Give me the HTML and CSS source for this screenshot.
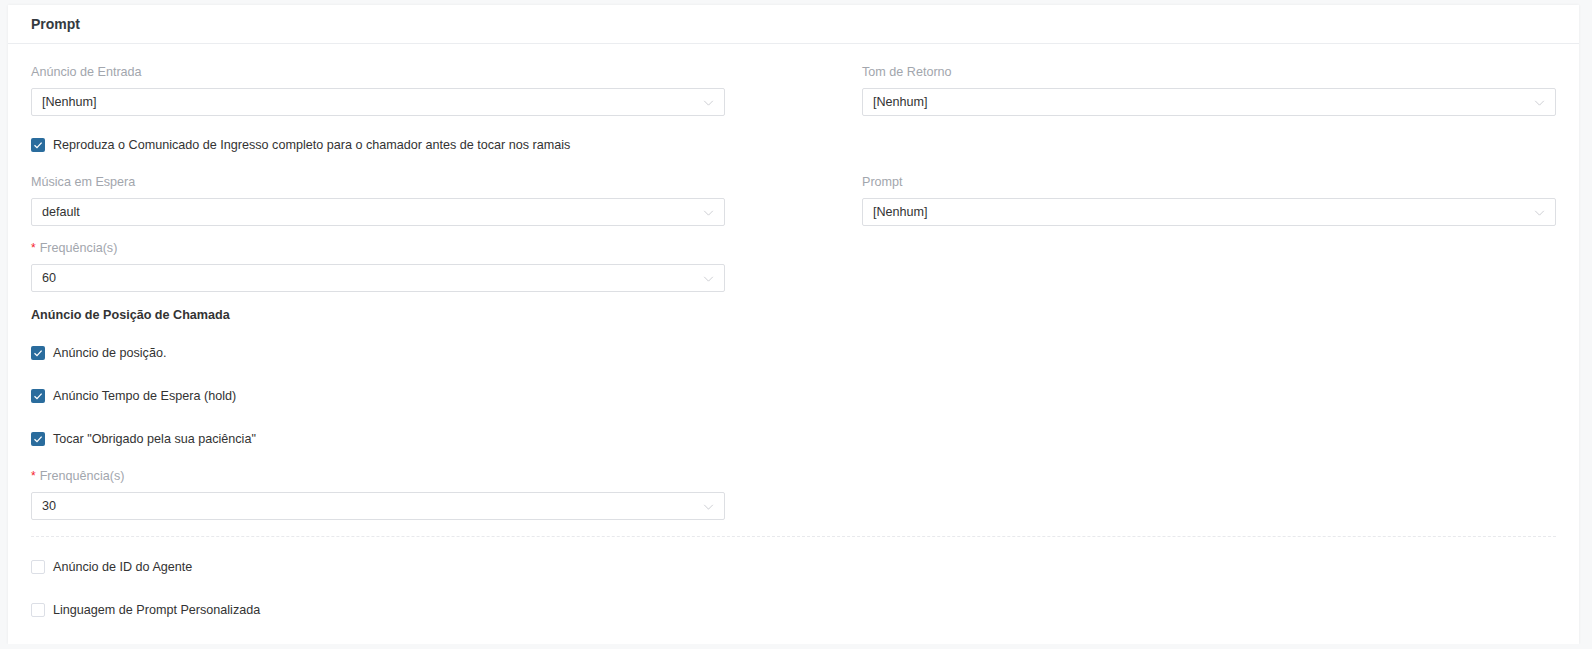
FILE: index.html
```html
<!DOCTYPE html>
<html lang="pt">
<head>
  <meta charset="UTF-8" />
  <title>Prompt</title>
  <link rel="stylesheet" href="styles.css">
</head>
<body>

<div class="card">
  <div class="card-header">Prompt</div>

  <div class="card-body">
    <div class="row">
      <div class="form-item">
        <label>Anúncio de Entrada</label>
        <div class="select">[Nenhum]<svg class="arrow" viewBox="0 0 12 7"><polyline points="1,1 6,6 11,1"/></svg></div>
      </div>
      <div class="form-item">
        <label>Tom de Retorno</label>
        <div class="select">[Nenhum]<svg class="arrow" viewBox="0 0 12 7"><polyline points="1,1 6,6 11,1"/></svg></div>
      </div>
    </div>

    <div class="check check-first">
      <span class="box checked"><svg viewBox="0 0 14 14"><polyline points="3.5,7.2 6,9.6 10.6,4.6"/></svg></span>
      Reproduza o Comunicado de Ingresso completo para o chamador antes de tocar nos ramais
    </div>

    <div class="row row-music">
      <div class="form-item">
        <label>Música em Espera</label>
        <div class="select">default<svg class="arrow" viewBox="0 0 12 7"><polyline points="1,1 6,6 11,1"/></svg></div>
      </div>
      <div class="form-item">
        <label>Prompt</label>
        <div class="select">[Nenhum]<svg class="arrow" viewBox="0 0 12 7"><polyline points="1,1 6,6 11,1"/></svg></div>
      </div>
    </div>

    <div class="row row-freq">
      <div class="form-item">
        <label><span class="req">*</span>Frequência(s)</label>
        <div class="select">60<svg class="arrow" viewBox="0 0 12 7"><polyline points="1,1 6,6 11,1"/></svg></div>
      </div>
    </div>

    <h4 class="section-title">Anúncio de Posição de Chamada</h4>

    <div class="check check-list">
      <span class="box checked"><svg viewBox="0 0 14 14"><polyline points="3.5,7.2 6,9.6 10.6,4.6"/></svg></span>
      Anúncio de posição.
    </div>
    <div class="check check-list">
      <span class="box checked"><svg viewBox="0 0 14 14"><polyline points="3.5,7.2 6,9.6 10.6,4.6"/></svg></span>
      Anúncio Tempo de Espera (hold)
    </div>
    <div class="check check-list">
      <span class="box checked"><svg viewBox="0 0 14 14"><polyline points="3.5,7.2 6,9.6 10.6,4.6"/></svg></span>
      Tocar "Obrigado pela sua paciência"
    </div>

    <div class="row row-freq2">
      <div class="form-item">
        <label><span class="req">*</span>Frenquência(s)</label>
        <div class="select">30<svg class="arrow" viewBox="0 0 12 7"><polyline points="1,1 6,6 11,1"/></svg></div>
      </div>
    </div>

    <div class="divider"></div>

    <div class="check check-agent">
      <span class="box"></span>
      Anúncio de ID do Agente
    </div>
    <div class="check check-list">
      <span class="box"></span>
      Linguagem de Prompt Personalizada
    </div>
  </div>
</div>

</body>
</html>
```

FILE: styles.css
```css
body {
  margin: 0;
  background: #f7f8f9;
  font-family: "Liberation Sans", Arial, sans-serif;
  font-size: 12.6px;
  color: #333;
}

.card {
  margin: 5px 0 0 8px;
  width: 1571px;
  background: #fff;
  box-shadow: 0 0 3px rgba(0, 0, 0, 0.06);
}

.card-header {
  height: 38px;
  line-height: 38px;
  padding: 0 23px;
  border-bottom: 1px solid #ebedf0;
  font-size: 14px;
  font-weight: bold;
  color: #343a40;
}

.card-body {
  padding: 18px 23px 24px;
}

.row {
  display: grid;
  grid-template-columns: 694px 694px;
  column-gap: 137px;
}

.row-music {
  margin-top: 17px;
}

.row-freq {
  margin-top: 12px;
}

.row-freq2 {
  margin-top: 17px;
}

.form-item label {
  display: block;
  height: 20px;
  line-height: 20px;
  margin-bottom: 6px;
  color: #a2a6ad;
}

.req {
  color: #f5222d;
  margin-right: 4px;
  font-size: 12px;
}

.select {
  position: relative;
  box-sizing: border-box;
  height: 28px;
  line-height: 26px;
  padding: 0 10px;
  border: 1px solid #dddfe3;
  border-radius: 2px;
  color: #333;
}

.select .arrow {
  position: absolute;
  right: 10px;
  top: 11px;
  width: 11px;
  height: 6px;
  fill: none;
  stroke: #c4c7cc;
  stroke-width: 1;
}

.check {
  display: flex;
  align-items: center;
  height: 20px;
  color: #333;
}

.check-first {
  margin-top: 19px;
}

.check-list {
  margin-top: 23px;
}

.section-title + .check-list {
  margin-top: 18px;
}

.check-agent {
  margin-top: 20px;
}

.box {
  box-sizing: border-box;
  width: 14px;
  height: 14px;
  margin-right: 8px;
  border: 1px solid #dcdfe6;
  border-radius: 2px;
  background: #fff;
  flex-shrink: 0;
}

.box.checked {
  border: none;
  background: #2a6c9d;
}

.box svg {
  display: block;
  width: 14px;
  height: 14px;
  fill: none;
  stroke: #fff;
  stroke-width: 1.3;
}

.section-title {
  margin: 13px 0 0;
  height: 20px;
  line-height: 20px;
  font-size: 12.6px;
  font-weight: bold;
  color: #333;
}

.divider {
  margin-top: 16px;
  border-top: 1px dashed #e8e9ec;
}
```
